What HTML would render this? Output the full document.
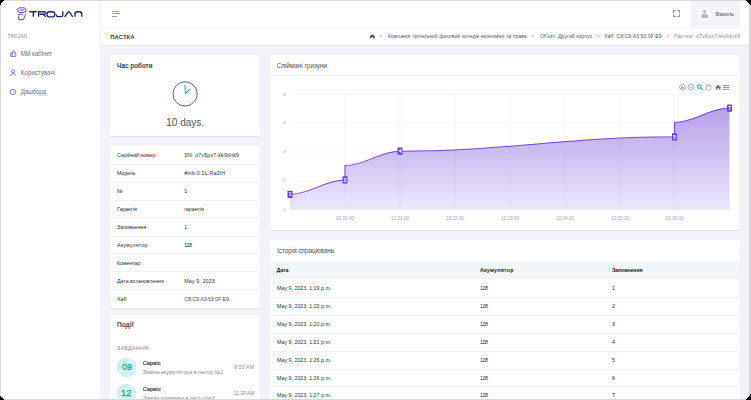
<!DOCTYPE html>
<html><head><meta charset="utf-8">
<style>
*{margin:0;padding:0;box-sizing:border-box}
html,body{width:751px;height:400px;overflow:hidden;background:#000}
body{font-family:"Liberation Sans",sans-serif;position:relative}
.frame{position:absolute;left:0;top:0;width:751px;height:400px;background:#d9d9d9;overflow:hidden}
.inner{position:absolute;left:1px;top:1px;width:748px;height:398px;background:#f3f3f9;border-radius:4px;overflow:hidden}
.w{position:absolute;left:-1px;top:-1px;width:751px;height:400px}
.abs{position:absolute}
.card{position:absolute;background:#fff;border-radius:1.5px;box-shadow:0 .5px 1px rgba(56,65,74,.10)}
.t{position:absolute;white-space:nowrap;line-height:1}
</style></head><body>
<div class="frame"><div class="inner"><div class="w">

<div class="abs" style="left:100px;top:0;width:651px;height:29px;background:#fff;border-bottom:1px solid #f7f7fa"></div>
<div class="abs" style="left:100px;top:29px;width:651px;height:15.8px;background:#fff;box-shadow:0 .5px 1px rgba(56,65,74,.06)"></div>
<div class="abs" style="left:0;top:0;width:101px;height:400px;background:#fff;border-right:1px solid #f5f5f9"></div>

<!-- logo icon -->
<svg class="abs" style="left:0;top:0" width="100" height="28" viewBox="0 0 100 28">
  <path d="M19.6 7.7 H23.8 Q25.3 7.7 26.1 10.1 Q25.3 12.5 23.8 12.5 H19.6 Q18.1 12.5 17.3 10.1 Q18.1 7.7 19.6 7.7z" fill="none" stroke="#7c4ee0" stroke-width="1.1" stroke-linejoin="round"/>
  <rect x="19.4" y="8.8" width="4.9" height="2.4" rx=".7" fill="#bba6f0"/>
  <path d="M22.6 14.2 H19.4 Q18.6 14.2 18.6 15 V18.6 Q18.6 19.6 19.6 19.6 H22.6 Q23.4 19.6 23.7 18.9 L25.6 14.4" fill="none" stroke="#7c4ee0" stroke-width="1.05" stroke-linecap="round"/>
  <g fill="none" stroke="#1d2868" stroke-width="1.35">
    <path d="M29.4 11.7 H36.8 M33.3 11.7 V16.8"/>
    <path d="M38.6 16.8 V11.7 H44 Q45.5 11.7 45.5 12.95 Q45.5 14.2 44 14.2 H39.6 M43.2 14.2 L45.7 16.8"/>
    <path d="M49.3 11.7 H52.4 Q54.8 11.7 54.8 14.25 Q54.8 16.8 52.4 16.8 H49.3 Q46.9 16.8 46.9 14.25 Q46.9 11.7 49.3 11.7z"/>
    <path d="M56.4 14.4 V15 Q56.4 16.6 57.8 16.6 H61 Q62.8 16.6 62.8 15 V11.3"/>
    <path d="M64.6 16.9 L68.3 11.9 Q68.8 11.3 69.3 11.9 L72.8 16.9"/>
    <path d="M75 16.8 V13.9 Q75 11.7 77.3 11.7 H79.5 Q81.8 11.7 81.8 13.9 V16.8"/>
  </g>
</svg>

<!-- menu icons -->
<svg class="abs" style="left:0;top:40px" width="20" height="60" viewBox="0 40 20 60">
 <g fill="none" stroke="#8256e0" stroke-width=".85" stroke-linejoin="round">
  <path d="M10.7 56.4 V52.8 H12.4 L13.3 50.9 Q14.5 50.9 14.4 52.1 L14.2 52.8 H15.8 V56.4 Z M12.4 52.8 V56.4"/>
  <circle cx="13" cy="71.3" r="1.6"/>
  <path d="M10.6 75.8 Q10.9 73.4 13 73.4 Q15.1 73.4 15.4 75.8"/>
  <circle cx="13" cy="91.9" r="2.7"/>
  <path d="M13 92.3 L14.4 91.1"/>
 </g>
</svg>

<!-- hamburger -->
<svg class="abs" style="left:100px;top:0" width="30" height="28" viewBox="100 0 30 28">
  <path d="M112 11.5h6.8M112 13.5h8.2M112 16.5h5" stroke="#878a99" stroke-width=".8"/>
</svg>
<!-- fullscreen -->
<svg class="abs" style="left:660px;top:0" width="30" height="28" viewBox="660 0 30 28">
  <path d="M673.5 12.8V10.5h2.2M677.3 10.5h2.2v2.3M679.5 14.3v2.2h-2.2M675.7 16.5h-2.2v-2.2" fill="none" stroke="#5d6570" stroke-width=".75"/>
</svg>
<div class="abs" style="left:691.2px;top:1px;width:48.6px;height:27px;background:#f3f3f9"></div>
<div class="abs" style="left:697.8px;top:7.7px;width:13.2px;height:13.2px;border-radius:50%;background:#fff"></div>
<svg class="abs" style="left:690px;top:0" width="30" height="28" viewBox="690 0 30 28">
  <path d="M703 10.9 Q703 9.8 704.55 9.8 Q706.1 9.8 706.1 10.9 V12.1 Q706.1 13.3 704.55 13.3 Q703 13.3 703 12.1z" fill="#bbb8d5"/>
  <path d="M701.4 17.9 V15.6 Q701.4 13.9 703.2 13.9 H706.4 Q708.2 13.9 708.2 15.6 V17.9z" fill="#bbb8d5"/>
</svg>

<!-- breadcrumb home -->
<svg class="abs" style="left:365px;top:30px" width="12" height="10" viewBox="365 30 12 10">
  <path d="M369.9 36 L372.3 34.3 L374.7 36 V38.2 H373 V36.9 H371.6 V38.2 H369.9z" fill="#495057"/>
</svg>

<!-- cards -->
<div class="card" style="left:110px;top:55px;width:150px;height:81px"></div>
<div class="card" style="left:110px;top:146px;width:150px;height:162px"></div>
<div class="card" style="left:110px;top:315px;width:150px;height:100px"></div>
<div class="card" style="left:270px;top:55px;width:470px;height:174.6px"></div>
<div class="card" style="left:270px;top:240px;width:470px;height:180px"></div>
<div class="abs" style="left:270px;top:75px;width:470px;height:.7px;background:#eeeff2"></div>
<div class="abs" style="left:270px;top:261px;width:470px;height:17.6px;background:#f3f6f9"></div>

<!-- clock -->
<svg class="abs" style="left:160px;top:70px" width="50" height="50" viewBox="160 70 50 50">
  <circle cx="185.1" cy="93.9" r="12.1" fill="none" stroke="#405189" stroke-width=".9"/>
  <path d="M184.9 85.4 L185.4 93.5 L189.9 89.4" fill="none" stroke="#1db4bd" stroke-width="1.05" stroke-linejoin="round" stroke-linecap="round"/>
</svg>

<!-- event circles -->
<svg class="abs" style="left:110px;top:350px" width="30" height="50" viewBox="110 350 30 50">
  <defs><linearGradient id="st" x1="0" y1="0" x2="1" y2="1"><stop offset="0" stop-color="#cdeee9"/><stop offset=".36" stop-color="#cdeee9"/><stop offset=".4" stop-color="#dbf4f0"/><stop offset=".52" stop-color="#dbf4f0"/><stop offset=".56" stop-color="#cdeee9"/><stop offset=".66" stop-color="#cdeee9"/><stop offset=".69" stop-color="#d8f3ef"/><stop offset=".76" stop-color="#d8f3ef"/><stop offset=".79" stop-color="#cdeee9"/><stop offset="1" stop-color="#cdeee9"/></linearGradient></defs>
  <circle cx="126.4" cy="367.5" r="9.8" fill="url(#st)"/>
  <circle cx="126.4" cy="393.5" r="9.8" fill="url(#st)"/>
</svg>

<div class="abs" style="left:110px;top:164.4px;width:150px;height:.7px;background:#eff1f3"></div><div class="abs" style="left:110px;top:182px;width:150px;height:.7px;background:#eff1f3"></div><div class="abs" style="left:110px;top:199.6px;width:150px;height:.7px;background:#eff1f3"></div><div class="abs" style="left:110px;top:217.4px;width:150px;height:.7px;background:#eff1f3"></div><div class="abs" style="left:110px;top:235.6px;width:150px;height:.7px;background:#eff1f3"></div><div class="abs" style="left:110px;top:253.4px;width:150px;height:.7px;background:#eff1f3"></div><div class="abs" style="left:110px;top:271.4px;width:150px;height:.7px;background:#eff1f3"></div><div class="abs" style="left:110px;top:289.3px;width:150px;height:.7px;background:#eff1f3"></div><div class="abs" style="left:270px;top:296.9px;width:470px;height:.7px;background:#eff1f3"></div><div class="abs" style="left:270px;top:314.8px;width:470px;height:.7px;background:#eff1f3"></div><div class="abs" style="left:270px;top:332.8px;width:470px;height:.7px;background:#eff1f3"></div><div class="abs" style="left:270px;top:350.6px;width:470px;height:.7px;background:#eff1f3"></div><div class="abs" style="left:270px;top:368.5px;width:470px;height:.7px;background:#eff1f3"></div><div class="abs" style="left:270px;top:386.3px;width:470px;height:.7px;background:#eff1f3"></div>
<svg class="abs" style="left:270px;top:76px" width="470" height="150" viewBox="270 76 470 150"><text x="285.6" y="210.50" font-family="Liberation Sans" font-size="4.4" fill="#9a9eab" text-anchor="end">0</text><text x="285.6" y="181.75" font-family="Liberation Sans" font-size="4.4" fill="#9a9eab" text-anchor="end">2</text><text x="285.6" y="153.00" font-family="Liberation Sans" font-size="4.4" fill="#9a9eab" text-anchor="end">4</text><text x="285.6" y="124.25" font-family="Liberation Sans" font-size="4.4" fill="#9a9eab" text-anchor="end">6</text><text x="285.6" y="95.50" font-family="Liberation Sans" font-size="4.4" fill="#9a9eab" text-anchor="end">8</text><text x="345" y="220" font-family="Liberation Sans" font-size="4.7" fill="#a0a4b0" text-anchor="middle">10:20:00</text><text x="400" y="220" font-family="Liberation Sans" font-size="4.7" fill="#a0a4b0" text-anchor="middle">10:21:00</text><text x="455" y="220" font-family="Liberation Sans" font-size="4.7" fill="#a0a4b0" text-anchor="middle">10:22:00</text><text x="510" y="220" font-family="Liberation Sans" font-size="4.7" fill="#a0a4b0" text-anchor="middle">10:23:00</text><text x="565" y="220" font-family="Liberation Sans" font-size="4.7" fill="#a0a4b0" text-anchor="middle">10:24:00</text><text x="620" y="220" font-family="Liberation Sans" font-size="4.7" fill="#a0a4b0" text-anchor="middle">10:25:00</text><text x="674.5" y="220" font-family="Liberation Sans" font-size="4.7" fill="#a0a4b0" text-anchor="middle">10:26:00</text><defs><linearGradient id="g" x1="0" y1="94" x2="0" y2="210" gradientUnits="userSpaceOnUse"><stop offset="0" stop-color="#af96e9"/><stop offset="1" stop-color="#ece7f9"/></linearGradient></defs><path d="M290,194.32 C310.90,194.32 324.10,179.95 345,179.95 L345,165.57 C365.90,165.57 379.10,151.20 400,151.20 C504.31,151.20 570.19,136.82 674.5,136.82 L674.5,122.45 C695.40,122.45 708.60,108.07 729.5,108.07 L729.5,209.5 L290,209.5 Z" fill="url(#g)"/><line x1="290" x2="729.5" y1="209.50" y2="209.50" stroke="#8a8fa3" stroke-opacity=".11" stroke-width=".7"/><line x1="290" x2="729.5" y1="180.75" y2="180.75" stroke="#8a8fa3" stroke-opacity=".11" stroke-width=".7"/><line x1="290" x2="729.5" y1="152.00" y2="152.00" stroke="#8a8fa3" stroke-opacity=".11" stroke-width=".7"/><line x1="290" x2="729.5" y1="123.25" y2="123.25" stroke="#8a8fa3" stroke-opacity=".11" stroke-width=".7"/><line x1="290" x2="729.5" y1="94.50" y2="94.50" stroke="#8a8fa3" stroke-opacity=".11" stroke-width=".7"/><line x1="345" x2="345" y1="94.5" y2="211.5" stroke="#8a8fa3" stroke-opacity=".11" stroke-width=".7"/><line x1="400" x2="400" y1="94.5" y2="211.5" stroke="#8a8fa3" stroke-opacity=".11" stroke-width=".7"/><line x1="455" x2="455" y1="94.5" y2="211.5" stroke="#8a8fa3" stroke-opacity=".11" stroke-width=".7"/><line x1="510" x2="510" y1="94.5" y2="211.5" stroke="#8a8fa3" stroke-opacity=".11" stroke-width=".7"/><line x1="565" x2="565" y1="94.5" y2="211.5" stroke="#8a8fa3" stroke-opacity=".11" stroke-width=".7"/><line x1="620" x2="620" y1="94.5" y2="211.5" stroke="#8a8fa3" stroke-opacity=".11" stroke-width=".7"/><line x1="674.5" x2="674.5" y1="94.5" y2="211.5" stroke="#8a8fa3" stroke-opacity=".11" stroke-width=".7"/><path d="M290,194.32 C310.90,194.32 324.10,179.95 345,179.95 L345,165.57 C365.90,165.57 379.10,151.20 400,151.20 C504.31,151.20 570.19,136.82 674.5,136.82 L674.5,122.45 C695.40,122.45 708.60,108.07 729.5,108.07" fill="none" stroke="#7444dc" stroke-width="1.05"/><rect x="287.5" y="190.72" width="5" height="7.2" rx=".5" fill="#6b3ddb"/><text x="290" y="196.22" font-family="Liberation Sans" font-size="5.5" font-weight="bold" fill="#fff" text-anchor="middle">1</text><rect x="342.5" y="176.35" width="5" height="7.2" rx=".5" fill="#6b3ddb"/><text x="345" y="181.85" font-family="Liberation Sans" font-size="5.5" font-weight="bold" fill="#fff" text-anchor="middle">2</text><rect x="397.5" y="147.60" width="5" height="7.2" rx=".5" fill="#6b3ddb"/><text x="400" y="153.10" font-family="Liberation Sans" font-size="5.5" font-weight="bold" fill="#fff" text-anchor="middle">4</text><rect x="672.0" y="133.22" width="5" height="7.2" rx=".5" fill="#6b3ddb"/><text x="674.5" y="138.72" font-family="Liberation Sans" font-size="5.5" font-weight="bold" fill="#fff" text-anchor="middle">5</text><rect x="727.0" y="104.47" width="5" height="7.2" rx=".5" fill="#6b3ddb"/><text x="729.5" y="109.97" font-family="Liberation Sans" font-size="5.5" font-weight="bold" fill="#fff" text-anchor="middle">7</text><g fill="none" stroke="#6e7687" stroke-width=".6"><circle cx="682.5" cy="87.1" r="2.85"/><path d="M681.1 87.3h2.8M682.5 85.9v2.8"/><circle cx="690.8" cy="87.1" r="2.85"/><path d="M689.4 87.3h2.8"/></g><g fill="none" stroke="#008ffb" stroke-width="1"><circle cx="699.2" cy="86.5" r="1.85"/><path d="M700.6 87.9l2 2"/></g><path d="M706 88.2 V86.4 Q706 85.8 706.6 85.8 Q707.1 85.8 707.1 86.4 V85.2 Q707.1 84.6 707.7 84.6 Q708.3 84.6 708.3 85.2 V85.1 Q708.4 84.5 709 84.6 Q709.5 84.7 709.5 85.3 V85.8 Q709.7 85.3 710.3 85.4 Q710.9 85.6 710.9 86.2 V88.2 Q710.9 90.4 708.6 90.4 Q707 90.4 706 88.2z" fill="none" stroke="#6e7687" stroke-width=".55"/><path d="M715.1 87.4 L718.15 84.8 L721.2 87.4 H720.4 V89.8 H718.9 V88.3 H717.4 V89.8 H715.9 V87.4z" fill="#6e7687"/><path d="M723 85.5h6.4M723 87.45h6.4M723 89.4h6.4" stroke="#6e7687" stroke-width=".75"/></svg>
<div class="t" style="left:7.60px;top:35px;font-size:4.9px;color:#8b8e9c;letter-spacing:-0.020px">TROJAN</div>
<div class="t" style="left:20.75px;top:51px;font-size:6.3px;color:#6f7283;letter-spacing:-0.175px">Мій кабінет</div>
<div class="t" style="left:20.75px;top:70px;font-size:6.3px;color:#6f7283;letter-spacing:-0.050px">Користувачі</div>
<div class="t" style="left:20.75px;top:89px;font-size:6.3px;color:#6f7283;letter-spacing:-0.275px">Дашборд</div>
<div class="t" style="left:715.60px;top:11px;font-size:6.0px;color:#575e68;letter-spacing:-0.370px">Василь</div>
<div class="t" style="left:110.20px;top:35px;font-size:5.9px;color:#343a40;font-weight:bold;letter-spacing:0.080px">ПАСТКА</div>
<div class="t" style="left:379.30px;top:34px;font-size:5px;color:#878a99">&gt;</div>
<div class="t" style="left:387.90px;top:34px;font-size:5px;color:#4d5570;letter-spacing:0.108px">Компанія: Ірпінський фаховий коледж економіки та права</div>
<div class="t" style="left:530.90px;top:34px;font-size:5px;color:#878a99">&gt;</div>
<div class="t" style="left:539.90px;top:34px;font-size:5px;color:#4d5570;letter-spacing:0.085px">Об'єкт: Другий корпус</div>
<div class="t" style="left:596.30px;top:34px;font-size:5px;color:#878a99">&gt;</div>
<div class="t" style="left:604.30px;top:34px;font-size:5px;color:#4d5570;letter-spacing:0.095px">Хаб: C8:C9:A3:53:0F:E9</div>
<div class="t" style="left:666.30px;top:34px;font-size:5px;color:#878a99">&gt;</div>
<div class="t" style="left:674.00px;top:34px;font-size:5px;color:#878a99;letter-spacing:0.359px">Пастка: o7v5px7-kk9dnk9</div>
<div class="t" style="left:117.00px;top:63px;font-size:6.5px;color:#2a2f34;letter-spacing:0.144px;-webkit-text-stroke:.2px #2a2f34">Час роботи</div>
<div class="t" style="left:166.20px;top:118px;font-size:10px;color:#4f555c;letter-spacing:0.014px">10 days.</div>
<div class="t" style="left:117.00px;top:153px;font-size:5.3px;color:#2b3035;letter-spacing:-0.092px">Серійний номер</div>
<div class="t" style="left:184.20px;top:153px;font-size:5.3px;color:#2b3035;letter-spacing:0.167px">SN: o7v5px7-kk9dnk9</div>
<div class="t" style="left:117.00px;top:171px;font-size:5.3px;color:#2b3035;letter-spacing:-0.100px">Модель</div>
<div class="t" style="left:184.20px;top:171px;font-size:5.3px;color:#2b3035;letter-spacing:0.154px">#mb-0.1L.Ra0IH</div>
<div class="t" style="left:117.00px;top:189px;font-size:5.3px;color:#2b3035">№</div>
<div class="t" style="left:184.20px;top:189px;font-size:5.3px;color:#2b3035">1</div>
<div class="t" style="left:117.00px;top:207px;font-size:5.3px;color:#2b3035;letter-spacing:-0.143px">Гарантія</div>
<div class="t" style="left:184.20px;top:207px;font-size:5.3px;color:#2b3035;letter-spacing:-0.043px">гарантія</div>
<div class="t" style="left:117.00px;top:225px;font-size:5.3px;color:#2b3035">Заповнення</div>
<div class="t" style="left:184.20px;top:225px;font-size:5.3px;color:#2b3035">1</div>
<div class="t" style="left:117.00px;top:243px;font-size:5.3px;color:#2b3035;letter-spacing:0.167px">Акумулятор</div>
<div class="t" style="left:184.20px;top:243px;font-size:5.3px;color:#2b3035;letter-spacing:-0.600px">128</div>
<div class="t" style="left:117.00px;top:261px;font-size:5.3px;color:#2b3035;letter-spacing:-0.057px">Коментар</div>
<div class="t" style="left:117.00px;top:279px;font-size:5.3px;color:#2b3035;letter-spacing:-0.025px">Дата встановлення</div>
<div class="t" style="left:184.20px;top:279px;font-size:5.3px;color:#2b3035;letter-spacing:0.140px">May 9, 2023</div>
<div class="t" style="left:117.00px;top:297px;font-size:5.3px;color:#2b3035">Хаб</div>
<div class="t" style="left:184.20px;top:297px;font-size:5.3px;color:#405189;letter-spacing:-0.075px">C8:C9:A3:53:0F:E9</div>
<div class="t" style="left:117.00px;top:322px;font-size:6.5px;color:#2a2f34;letter-spacing:0.350px;-webkit-text-stroke:.2px #2a2f34">Події</div>
<div class="t" style="left:117.00px;top:346px;font-size:5.2px;color:#878a99;letter-spacing:0.375px">ЗАВДАННЯ:</div>
<div class="t" style="left:142.80px;top:361px;font-size:5.6px;color:#3d434a;letter-spacing:0.080px;-webkit-text-stroke:.22px #3d434a">Сервіс</div>
<div class="t" style="left:142.80px;top:370px;font-size:5.3px;color:#878a99;letter-spacing:-0.010px">Заміна акумулятора в пастці №2</div>
<div class="t" style="left:234.00px;top:365px;font-size:5.2px;color:#878a99;letter-spacing:0.167px">9:20 AM</div>
<div class="t" style="left:142.80px;top:387px;font-size:5.6px;color:#3d434a;letter-spacing:0.080px;-webkit-text-stroke:.22px #3d434a">Сервіс</div>
<div class="t" style="left:142.80px;top:396px;font-size:5.3px;color:#878a99;letter-spacing:-0.042px">Заміна приманки в пастці №3</div>
<div class="t" style="left:233.75px;top:391px;font-size:5.2px;color:#878a99;letter-spacing:-0.107px">11:30 AM</div>
<div class="t" style="left:121.90px;top:363px;font-size:8.6px;color:#14ad9c;transform:scaleX(1.039);transform-origin:0 0;-webkit-text-stroke:.3px #14ad9c">09</div>
<div class="t" style="left:121.12px;top:389px;font-size:8.6px;color:#14ad9c;transform:scaleX(1.075);transform-origin:0 0;-webkit-text-stroke:.3px #14ad9c">12</div>
<div class="t" style="left:276.80px;top:63px;font-size:6.4px;color:#495057">Спіймані гризуни</div>
<div class="t" style="left:277.10px;top:248px;font-size:6.4px;color:#495057;letter-spacing:-0.029px">Історія спрацювань</div>
<div class="t" style="left:276.60px;top:268px;font-size:5.3px;color:#212529;font-weight:bold;letter-spacing:-0.133px">Дата</div>
<div class="t" style="left:479.90px;top:268px;font-size:5.3px;color:#212529;font-weight:bold;letter-spacing:0.233px">Акумулятор</div>
<div class="t" style="left:611.90px;top:268px;font-size:5.3px;color:#212529;font-weight:bold;letter-spacing:-0.100px">Заповнення</div>
<div class="t" style="left:277.10px;top:286px;font-size:5.3px;color:#2b3035">May 9, 2023, 1:19 p.m.</div>
<div class="t" style="left:480.00px;top:286px;font-size:5.3px;color:#2b3035;letter-spacing:-0.450px">128</div>
<div class="t" style="left:612.00px;top:286px;font-size:5.3px;color:#2b3035">1</div>
<div class="t" style="left:277.10px;top:304px;font-size:5.3px;color:#2b3035">May 9, 2023, 1:20 p.m.</div>
<div class="t" style="left:480.00px;top:304px;font-size:5.3px;color:#2b3035;letter-spacing:-0.450px">128</div>
<div class="t" style="left:612.00px;top:304px;font-size:5.3px;color:#2b3035">2</div>
<div class="t" style="left:277.10px;top:322px;font-size:5.3px;color:#2b3035">May 9, 2023, 1:20 p.m.</div>
<div class="t" style="left:480.00px;top:322px;font-size:5.3px;color:#2b3035;letter-spacing:-0.450px">128</div>
<div class="t" style="left:612.00px;top:322px;font-size:5.3px;color:#2b3035">3</div>
<div class="t" style="left:277.10px;top:340px;font-size:5.3px;color:#2b3035">May 9, 2023, 1:21 p.m.</div>
<div class="t" style="left:480.00px;top:340px;font-size:5.3px;color:#2b3035;letter-spacing:-0.450px">128</div>
<div class="t" style="left:612.00px;top:340px;font-size:5.3px;color:#2b3035">4</div>
<div class="t" style="left:277.10px;top:358px;font-size:5.3px;color:#2b3035">May 9, 2023, 1:26 p.m.</div>
<div class="t" style="left:480.00px;top:358px;font-size:5.3px;color:#2b3035;letter-spacing:-0.450px">128</div>
<div class="t" style="left:612.00px;top:358px;font-size:5.3px;color:#2b3035">5</div>
<div class="t" style="left:277.10px;top:376px;font-size:5.3px;color:#2b3035">May 9, 2023, 1:26 p.m.</div>
<div class="t" style="left:480.00px;top:376px;font-size:5.3px;color:#2b3035;letter-spacing:-0.450px">128</div>
<div class="t" style="left:612.00px;top:376px;font-size:5.3px;color:#2b3035">6</div>
<div class="t" style="left:277.10px;top:393px;font-size:5.3px;color:#2b3035">May 9, 2023, 1:27 p.m.</div>
<div class="t" style="left:480.00px;top:393px;font-size:5.3px;color:#2b3035;letter-spacing:-0.450px">128</div>
<div class="t" style="left:612.00px;top:393px;font-size:5.3px;color:#2b3035">7</div>

</div></div></div>
<svg style="position:absolute;left:0;top:0" width="751" height="400" viewBox="0 0 751 400" shape-rendering="crispEdges"><path d="M0 0H4.5L0 5.2z M746 0H751V6z M751 393.8V400H745.6z M0 395.8V400H4z" fill="#000"/></svg>
</body></html>
